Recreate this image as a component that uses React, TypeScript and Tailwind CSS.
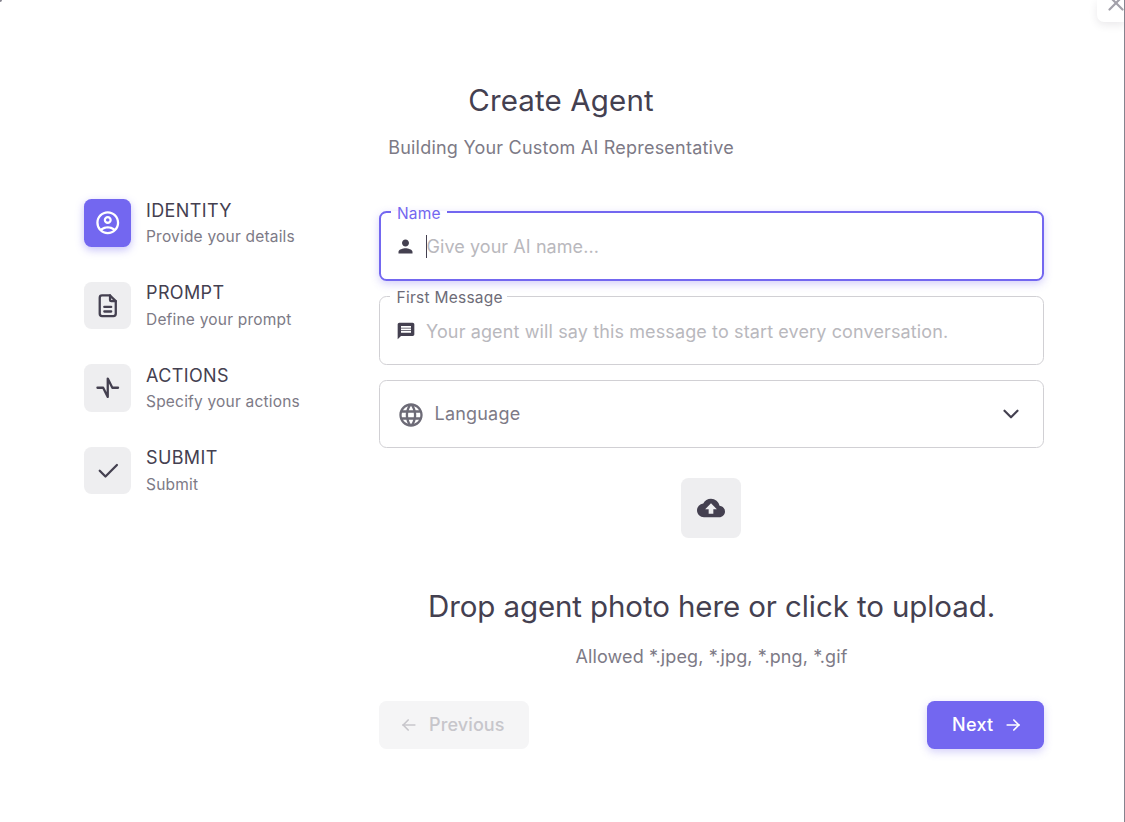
import React from 'react';
import { MdPerson, MdMessage, MdLanguage, MdCloudUpload, MdOutlineAccountCircle } from 'react-icons/md';
import { TbFileDescription, TbWaveSawTool, TbCheck, TbChevronDown, TbX, TbArrowLeft, TbArrowRight } from 'react-icons/tb';

const steps = [
  { title: 'IDENTITY', subtitle: 'Provide your details', Icon: MdOutlineAccountCircle, active: true },
  { title: 'PROMPT', subtitle: 'Define your prompt', Icon: TbFileDescription, active: false },
  { title: 'ACTIONS', subtitle: 'Specify your actions', Icon: TbWaveSawTool, active: false },
  { title: 'SUBMIT', subtitle: 'Submit', Icon: TbCheck, active: false },
];

function Stepper() {
  return (
    <nav className="flex w-[295px] flex-none flex-col gap-[35px] pt-[0.5px]">
      {steps.map(({ title, subtitle, Icon, active }) => (
        <div key={title} className="flex h-[47.5px] gap-[15px]">
          <div
            className={
              active
                ? 'flex h-[47.5px] w-[47px] items-center justify-center rounded-[7.5px] bg-[#7367f0] text-white shadow-[0_3px_8px_rgba(115,103,240,0.4)]'
                : 'flex h-[47.5px] w-[47px] items-center justify-center rounded-[7.5px] bg-[#eeeef0] text-[#444050]'
            }
          >
            <Icon size={27.5} />
          </div>
          <div className="-mt-[0.4px] whitespace-nowrap">
            <div className="text-[18px] leading-[24px] tracking-[0.38px] text-[#444050]">{title}</div>
            <div className="mt-[4.4px] text-[15.5px] leading-[20px] tracking-[0.2px] text-[#7d7a86]">{subtitle}</div>
          </div>
        </div>
      ))}
    </nav>
  );
}

export default function App() {
  return (
    <main className="relative h-[822px] w-[1125px] overflow-hidden border-r border-[#85838e] bg-white font-['Inter',sans-serif] text-[#444050]">
      <i className="absolute left-0 top-0 size-[2px] rounded-br-full bg-[#85838e]" />
      <button className="absolute -right-px top-0 h-[21.5px] w-[28px] rounded-bl-[7px] bg-white text-[#a3a1aa] shadow-[0_3px_8px_rgba(47,43,61,0.1)]">
        <TbX size={26} strokeWidth={2} className="absolute left-[6px] top-[-10px]" />
      </button>
      <header className="pr-[2px] pt-[80px] text-center">
        <h1 className="text-[29.5px] leading-[41px] tracking-[0.15px]">Create Agent</h1>
        <p className="mt-[13px] text-[18px] leading-[28px] tracking-[0.22px] text-[#7d7a86]">Building Your Custom AI Representative</p>
      </header>
      <div className="flex pl-[84px] pr-[80px] pt-[36.5px]">
        <Stepper />
        <section className="w-[665px] pt-[3px]">
          <fieldset className="flex h-[79px] rounded-[7.5px] border-2 border-[#7367f0] pl-[10px] shadow-[0_3px_8px_rgba(115,103,240,0.3)]">
            <legend className="h-[20px] px-[6px] pt-[2px] text-[15.5px] leading-[20px] tracking-[0.15px] text-[#7367f0]">Name</legend>
            <div className="mt-[11px] flex h-[28px] items-center pl-[4px]">
              <MdPerson size={21} />
              <i className="ml-[10px] h-[23px] w-px bg-[#444050]" />
              <span className="-ml-[0.5px] text-[18px] tracking-[0.07px] text-[#b9b8bd]">Give your AI name...</span>
            </div>
          </fieldset>
          <fieldset className="mt-[5px] flex h-[79px] rounded-[7.5px] border border-[#d1d0d4] pl-[10px]">
            <legend className="h-[21px] pl-[6.5px] pr-[4.5px] pt-[2px] text-[15.5px] leading-[20px] tracking-[0.26px] text-[#6d6b77]">First Message</legend>
            <div className="mt-[10px] flex h-[28px] items-center pl-[6px]">
              <MdMessage size={20} />
              <span className="ml-[10px] mt-[2px] text-[18px] tracking-[0.12px] text-[#b9b8bd]">Your agent will say this message to start every conversation.</span>
            </div>
          </fieldset>
          <div className="mt-[15px] flex h-[68px] items-center rounded-[7.5px] border border-[#d1d0d4] pl-[16.5px] pr-[19px]">
            <MdLanguage size={28} className="mt-[2px] text-[#6d6b77]" />
            <span className="ml-[10px] text-[18px] tracking-[0.2px] text-[#7d7a86]">Language</span>
            <TbChevronDown size={26} className="ml-auto" />
          </div>
          <div className="ml-[302px] mt-[30px] flex size-[60px] items-center justify-center rounded-[7.5px] bg-[#eeeef0]">
            <MdCloudUpload size={28} />
          </div>
          <h2 className="mt-[48px] text-center text-[29.5px] leading-[41px] tracking-[-0.1px]">Drop agent photo here or click to upload.</h2>
          <p className="mt-[16px] text-center text-[18px] leading-[28px] tracking-[0.1px] text-[#7d7a86]">Allowed *.jpeg, *.jpg, *.png, *.gif</p>
          <div className="mt-[30px] flex h-[48px] justify-between text-[18px] font-medium">
            <button className="flex w-[150px] items-center rounded-[7.5px] bg-[#f5f5f6] pl-[20px] tracking-[0.12px] text-[#c7c6cb]">
              <TbArrowLeft size={20} /><span className="ml-[10px]">Previous</span>
            </button>
            <button className="flex w-[117px] items-center rounded-[7.5px] bg-[#7367f0] pl-[25px] tracking-[0.3px] text-white shadow-[0_3px_8px_rgba(115,103,240,0.3)]">
              <span className="mr-[10px]">Next</span><TbArrowRight size={20} />
            </button>
          </div>
        </section>
      </div>
    </main>
  );
}
